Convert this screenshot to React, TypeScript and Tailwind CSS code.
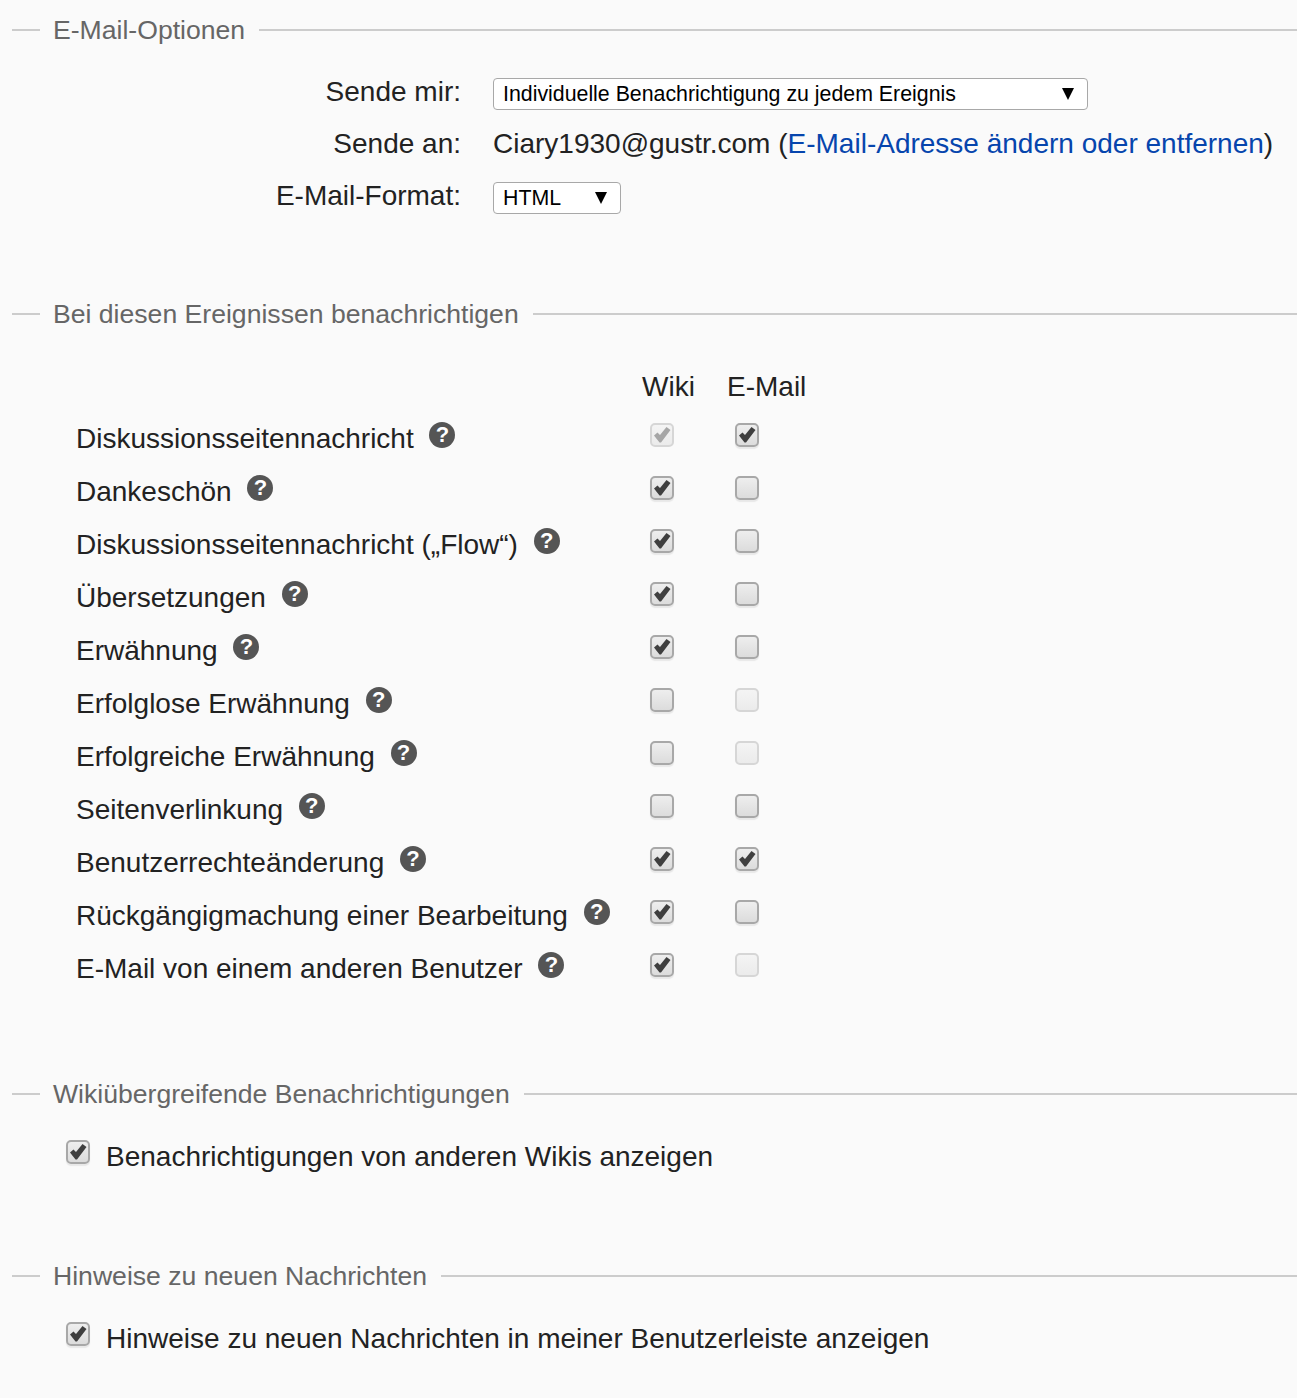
type Box = 'on' | 'off' | 'lockedOn' | 'lockedOff';

const events: { label: string; wiki: Box; email: Box }[] = [
  { label: 'Diskussionsseitennachricht', wiki: 'lockedOn', email: 'on' },
  { label: 'Dankeschön', wiki: 'on', email: 'off' },
  { label: 'Diskussionsseitennachricht („Flow“)', wiki: 'on', email: 'off' },
  { label: 'Übersetzungen', wiki: 'on', email: 'off' },
  { label: 'Erwähnung', wiki: 'on', email: 'off' },
  { label: 'Erfolglose Erwähnung', wiki: 'off', email: 'lockedOff' },
  { label: 'Erfolgreiche Erwähnung', wiki: 'off', email: 'lockedOff' },
  { label: 'Seitenverlinkung', wiki: 'off', email: 'off' },
  { label: 'Benutzerrechteänderung', wiki: 'on', email: 'on' },
  { label: 'Rückgängigmachung einer Bearbeitung', wiki: 'on', email: 'off' },
  { label: 'E-Mail von einem anderen Benutzer', wiki: 'on', email: 'lockedOff' },
];

function Checkbox({ state }: { state: Box }) {
  const locked = state === 'lockedOn' || state === 'lockedOff';
  const checked = state === 'on' || state === 'lockedOn';
  return (
    <span
      className={
        locked
          ? 'flex h-6 w-6 items-center justify-center rounded-[5px] border-2 border-[#d6d6d6] bg-gradient-to-b from-[#f4f4f4] to-[#ebebeb]'
          : 'flex h-6 w-6 items-center justify-center rounded-[5px] border-2 border-[#a8a8a8] bg-gradient-to-b from-[#eeeeee] to-[#dcdcdc] shadow-[0_2px_1px_#e8e8e8]'
      }
    >
      {checked && (
        <svg viewBox="0 0 20 20" className="h-5 w-5">
          <path
            d="M2 10.5 L5.5 7.5 L8 10 L14.5 2 L18.5 5 L9 17.5 L7.5 17.5 Z"
            fill={locked ? '#a6a6a6' : '#3f3f3f'}
          />
        </svg>
      )}
    </span>
  );
}

function Help() {
  return (
    <span className="ml-[15.75px] flex h-[26px] w-[26px] shrink-0 items-center justify-center rounded-full bg-[#555555] text-[22px] font-bold text-white">
      ?
    </span>
  );
}

function Legend({ title }: { title: string }) {
  return (
    <div className="flex items-center pl-3">
      <div className="h-0.5 w-7 bg-[#cccccc]"></div>
      <h2 className="pl-[13px] pr-[14px] text-[26.6px] leading-8 text-[#666666]">{title}</h2>
      <div className="h-0.5 flex-1 bg-[#cccccc]"></div>
    </div>
  );
}

function Select({ width, children }: { width: string; children: string }) {
  return (
    <div className={`flex h-8 items-center justify-between rounded-sm border border-[#a8a8a8] bg-white pl-[9px] pr-[13px] text-[21.33px] text-black ${width}`}>
      <span className="translate-y-px">{children}</span>
      <svg viewBox="0 0 12 12" className="h-3 w-3">
        <path d="M0 0 H12 L6 12 Z" fill="#000000" />
      </svg>
    </div>
  );
}

export default function App() {
  return (
    <div className="h-[1398px] overflow-hidden bg-[#fafafa] pt-3.5 font-['Liberation_Sans',Arial,sans-serif] text-[28px] text-[#222222]">
      {/* E-Mail options */}
      <Legend title="E-Mail-Optionen" />
      <div className="mt-5 grid grid-cols-[461px_1fr] items-center gap-x-8 gap-y-5">
        <div className="mt-3 -translate-y-0.5 text-right leading-8">Sende mir:</div>
        <div className="mt-3">
          <Select width="w-[595px]">Individuelle Benachrichtigung zu jedem Ereignis</Select>
        </div>
        <div className="-translate-y-0.5 text-right leading-8">Sende an:</div>
        <div className="-translate-y-0.5 leading-8">
          Ciary1930@gustr.com (<span className="text-[#0645ad]">E-Mail-Adresse ändern oder entfernen</span>)
        </div>
        <div className="-translate-y-0.5 text-right leading-8">E-Mail-Format:</div>
        <div>
          <Select width="w-32">HTML</Select>
        </div>
      </div>

      {/* Events */}
      <div className="mt-[84px]">
        <Legend title="Bei diesen Ereignissen benachrichtigen" />
      </div>
      <div className="mt-[41px] pl-[76px]">
        <div className="flex h-8 items-center leading-8">
          <div className="w-[566px]"></div>
          <div className="w-[85px]">Wiki</div>
          <div>E-Mail</div>
        </div>
        <div className="mt-[5px]">
          {events.map((row) => (
            <div key={row.label} className="flex h-[53px] items-center">
              <div className="flex w-[574px] items-center">
                <span className="translate-y-[4px] whitespace-nowrap">{row.label}</span>
                <Help />
              </div>
              <div className="w-[85px]">
                <Checkbox state={row.wiki} />
              </div>
              <Checkbox state={row.email} />
            </div>
          ))}
        </div>
      </div>

      {/* Cross-wiki */}
      <div className="mt-[87px]">
        <Legend title="Wikiübergreifende Benachrichtigungen" />
      </div>
      <div className="mt-[31px] flex items-center pl-[66px] leading-8">
        <span className="-translate-y-[5px]">
          <Checkbox state="on" />
        </span>
        <span className="ml-4">Benachrichtigungen von anderen Wikis anzeigen</span>
      </div>

      {/* New messages */}
      <div className="mt-[87px]">
        <Legend title="Hinweise zu neuen Nachrichten" />
      </div>
      <div className="mt-[31px] flex items-center pl-[66px] leading-8">
        <span className="-translate-y-[5px]">
          <Checkbox state="on" />
        </span>
        <span className="ml-4">Hinweise zu neuen Nachrichten in meiner Benutzerleiste anzeigen</span>
      </div>
    </div>
  );
}
